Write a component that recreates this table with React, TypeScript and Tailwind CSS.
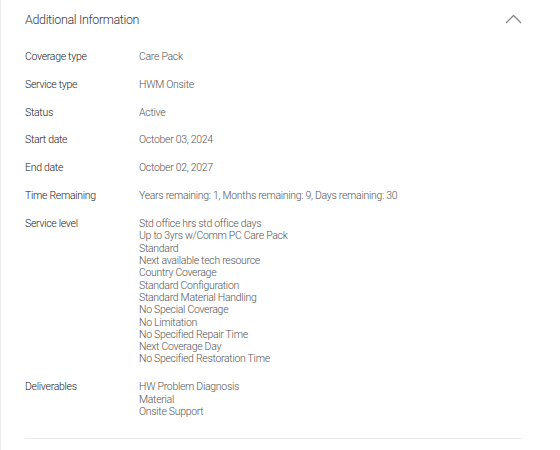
import React from "react";

interface Row {
	label: string;
	values: string[];
}

const rows: Row[] = [
	{ label: "Coverage type", values: ["Care Pack"] },
	{ label: "Service type", values: ["HWM Onsite"] },
	{ label: "Status", values: ["Active"] },
	{ label: "Start date", values: ["October 03, 2024"] },
	{ label: "End date", values: ["October 02, 2027"] },
	{
		label: "Time Remaining",
		values: ["Years remaining: 1, Months remaining: 9, Days remaining: 30"],
	},
	{
		label: "Service level",
		values: [
			"Std office hrs std office days",
			"Up to 3yrs w/Comm PC Care Pack",
			"Standard",
			"Next available tech resource",
			"Country Coverage",
			"Standard Configuration",
			"Standard Material Handling",
			"No Special Coverage",
			"No Limitation",
			"No Specified Repair Time",
			"Next Coverage Day",
			"No Specified Restoration Time",
		],
	},
	{
		label: "Deliverables",
		values: ["HW Problem Diagnosis", "Material", "Onsite Support"],
	},
];

export default function App() {
	return (
		<div className="w-[560px] h-[450px] bg-white border-l border-[#ececec] font-['Roboto',sans-serif] font-light overflow-hidden">
			<div className="pl-6 pr-[38px]">
				<div className="h-10 flex items-center justify-between">
					<h2 className="text-[12.5px] text-[#3a3a3a] tracking-[-0.35px]">
						Additional Information
					</h2>
					<svg width="17" height="10" viewBox="0 0 17 10" className="mt-[-2px]">
						<path
							d="M1 9 L8.5 1.5 L16 9"
							fill="none"
							stroke="#8a8a8a"
							strokeWidth="1.4"
						/>
					</svg>
				</div>

				<div className="mt-[3px] pb-[12px] border-b border-[#ebebeb]">
					{rows.map((row) => (
						<div
							key={row.label}
							className="flex py-[7.8px] text-[10.5px] leading-[12.3px] tracking-[-0.3px]"
						>
							<div className="w-[114px] shrink-0 text-[#222]">{row.label}</div>
							<div className="text-[#555]">
								{row.values.map((v) => (
									<div key={v}>{v}</div>
								))}
							</div>
						</div>
					))}
				</div>
			</div>
		</div>
	);
}
